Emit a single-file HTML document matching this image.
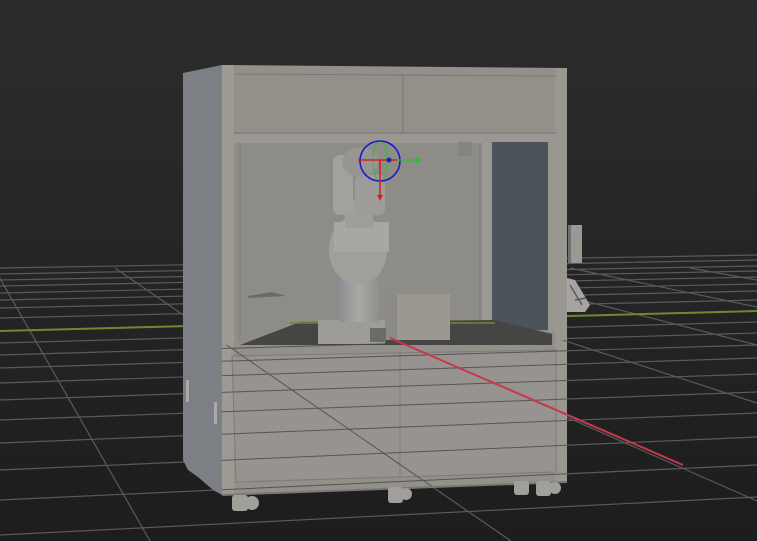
<!DOCTYPE html>
<html><head><meta charset="utf-8"><style>
html,body{margin:0;padding:0;width:757px;height:541px;overflow:hidden;background:#262626}
svg{display:block;position:absolute;left:0;top:0}
</style></head><body>
<svg width="757" height="541" viewBox="0 0 757 541" xmlns="http://www.w3.org/2000/svg" overflow="hidden">
<defs>
<linearGradient id="bg" x1="0" y1="0" x2="0" y2="1">
<stop offset="0" stop-color="#2c2c2c"/><stop offset="1" stop-color="#1d1d1d"/>
</linearGradient>
<linearGradient id="col" x1="0" y1="0" x2="1" y2="0">
<stop offset="0" stop-color="#8a8c92"/><stop offset="0.5" stop-color="#a9a8a4"/><stop offset="1" stop-color="#8f8e8a"/>
</linearGradient>
<clipPath id="lower"><polygon points="222,345 567,340 567,482 222,495"/></clipPath>
<g id="grid" fill="none">
<path d="M0,268L757,255 M0,274L757,260 M0,280L757,266 M0,286L757,271 M0,293L757,277 M0,300L757,284 M0,308L757,291 M0,318L757,300 M0,343L757,322 M0,355L757,333 M0,368L757,345 M0,383L757,358 M0,400L757,374 M0,420L757,392 M0,443L757,413 M0,470L757,437 M0,500L757,465 M0,535L757,497"/>
<path d="M-6,268L150,541 M115,268L511,541 M340,268L757,403 M455,268L757,345 M570,268L757,307 M690,268L757,280"/>
</g>
</defs>
<rect width="757" height="541" fill="url(#bg)"/>
<g stroke="#5a5a5a" stroke-width="1.2"><use href="#grid"/></g>
<path d="M0,331L757,311" stroke="#6d8a2e" stroke-width="2"/>
<path d="M228,268L757,501" stroke="#5a5a5a" stroke-width="1.2"/>

<rect x="568" y="225" width="14" height="38" fill="#9a9893"/>
<rect x="568" y="225" width="3" height="38" fill="#6f7175"/>
<polygon points="567,278 575,280 590,305 585,312 567,312" fill="#a6a49f"/>
<path d="M570,285L582,305M575,300L586,298" stroke="#555a62" stroke-width="1.5"/>

<polygon points="183,73 222,65 222,495 213,490 198,477 188,470 183,460" fill="#7c7f84"/>
<rect x="186" y="380" width="3" height="22" fill="#aaa"/>
<rect x="214" y="402" width="3" height="22" fill="#aaa"/>

<polygon points="222,65 567,68 567,482 222,495" fill="#938f89"/>
<rect x="222" y="65" width="12" height="430" fill="#9d9a94"/>
<rect x="555" y="68" width="12" height="415" fill="#9a9791"/>
<path d="M234,74L557,76 M403,74V133 M234,133H557" stroke="#7a7873" stroke-width="1"/>
<rect x="234" y="134" width="323" height="9" fill="#9b9893"/>
<rect x="236" y="143" width="318" height="200" fill="#8e8c86"/>
<path d="M240,143V340 M480,143V330" stroke="#7e7c77"/>
<rect x="482" y="143" width="10" height="188" fill="#9c9994"/>
<rect x="492" y="142" width="56" height="188" fill="#4c535b"/>
<rect x="548" y="142" width="7" height="190" fill="#999690"/>
<rect x="458" y="142" width="14" height="14" fill="#858480"/>
<polygon points="240,345 300,322 495,320 552,334 552,345" fill="#454544"/>
<path d="M290,323H495" stroke="#6d8a2e" stroke-width="1.5"/>
<polygon points="248,296 272,292 286,296 248,298" fill="#6a6a68"/>

<rect x="318" y="320" width="67" height="24" fill="#9e9c97"/>
<path d="M338,280 Q336,318 340,322 L378,322 Q382,300 378,275 Z" fill="url(#col)"/>
<ellipse cx="358" cy="250" rx="29" ry="35" fill="#a09f9b"/>
<rect x="334" y="222" width="55" height="30" fill="#a8a7a3"/>
<rect x="345" y="200" width="28" height="28" fill="#9f9e9a"/>
<rect x="333" y="155" width="20" height="60" rx="7" fill="#a2a19d"/>
<rect x="355" y="175" width="30" height="40" rx="6" fill="#9d9c98"/>
<ellipse cx="360" cy="162" rx="18" ry="15" fill="#979692"/>
<rect x="385" y="294" width="65" height="46" fill="#9b9892"/>
<rect x="385" y="294" width="12" height="46" fill="#8c8a85"/>
<rect x="370" y="328" width="16" height="14" fill="#6b6b69"/>

<ellipse cx="380" cy="161" rx="7" ry="20" fill="none" stroke="#2fbf2f" stroke-width="1"/>
<circle cx="380" cy="161" r="20" fill="none" stroke="#1a1ad0" stroke-width="1.6"/>
<path d="M358,160H397" stroke="#d42020" stroke-width="1.6"/>
<path d="M397,160H416" stroke="#2fbf2f" stroke-width="1.3"/>
<polygon points="416,157 422,160 416,163" fill="#2fbf2f"/>
<path d="M380,160V196" stroke="#d42020" stroke-width="1.6"/>
<polygon points="377,195 380,201 383,195" fill="#d42020"/>
<circle cx="389" cy="160" r="2.5" fill="#1a1ad0"/>

<polygon points="232,356 556,350 556,472 236,482" fill="#969390" stroke="#7d7b77"/>
<path d="M400,352V476" stroke="#7d7b77"/>
<g clip-path="url(#lower)" stroke="#4a4a4a" stroke-width="1" opacity="0.85"><use href="#grid"/></g>
<path d="M390,338L683,465" stroke="#c8384c" stroke-width="2"/>
<path d="M222,495L567,482" stroke="#7a7874" stroke-width="2"/>

<g fill="#a19f9a">
<rect x="232" y="495" width="16" height="16" rx="3"/><circle cx="252" cy="503" r="7"/>
<rect x="388" y="487" width="15" height="16" rx="3"/><circle cx="406" cy="494" r="6"/>
<rect x="514" y="481" width="15" height="14" rx="3"/>
<rect x="536" y="481" width="15" height="15" rx="3"/><circle cx="555" cy="488" r="6"/>
</g>
</svg>
</body></html>
